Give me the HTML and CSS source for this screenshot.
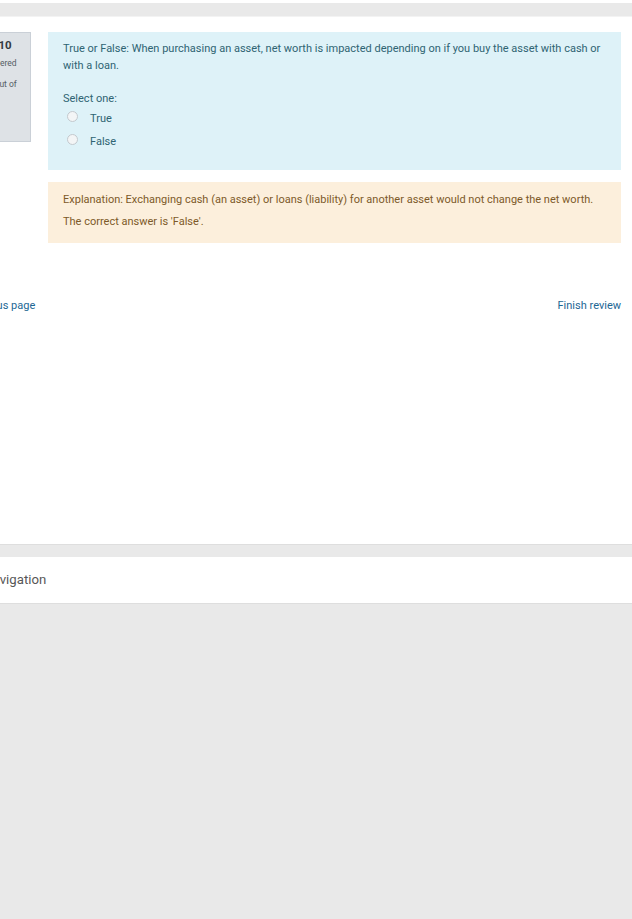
FILE: index.html
```html
<!DOCTYPE html>
<html lang="en">
<head>
<meta charset="utf-8">
<title>Quiz review</title>
<link rel="stylesheet" href="styles.css">
</head>
<body>
<div class="navbar-edge"></div>
<div class="page">
  <main class="region-main">
    <div class="que">
      <div class="info">
        <h3 class="qno">Question <span class="num">10</span></h3>
        <div class="state">Not answered</div>
        <div class="grade">Marked out of 1.00</div>
      </div>
      <div class="content">
        <div class="formulation">
          <div class="qtext">True or False: When purchasing an asset, net worth is impacted depending on if you buy the asset with cash or with a loan.</div>
          <div class="ablock">
            <div class="prompt">Select one:</div>
            <label class="answer"><span class="radio"></span>True</label>
            <label class="answer"><span class="radio"></span>False</label>
          </div>
        </div>
        <div class="outcome">
          <div class="generalfeedback">Explanation: Exchanging cash (an asset) or loans (liability) for another asset would not change the net worth.</div>
          <div class="rightanswer">The correct answer is 'False'.</div>
        </div>
      </div>
    </div>
    <div class="submitbtns">
      <a class="prev" href="#">Previous page</a>
      <a class="finish" href="#">Finish review</a>
    </div>
  </main>
  <section class="block">
    <h5 class="block-title">Quiz navigation</h5>
  </section>
</div>
</body>
</html>
```
FILE: styles.css
```css
html, body {
  margin: 0;
  padding: 0;
}

body {
  background: #e9e9e9;
  font-family: Roboto, "Liberation Sans", sans-serif;
  font-size: 11px;
  overflow: hidden;
  height: 919px;
}

.navbar-edge {
  height: 3px;
  background: #ffffff;
}

.page {
  margin-top: 13px;
}

.region-main {
  background: #ffffff;
  border-top: 1px solid #f3f3f3;
  border-bottom: 1px solid #dedede;
  padding: 15px 11px 0 0;
  box-sizing: border-box;
  height: 529px;
}

.que {
  display: flex;
  gap: 17px;
  margin-left: -42px;
}

/* question number / state / mark panel */
.info {
  width: 73px;
  flex: none;
  box-sizing: border-box;
  height: 110px;
  background: #dee2e6;
  border: 1px solid #cad0d7;
  padding: 5px 10px 5px 5px;
  color: #555d64;
}

.qno {
  margin: 0;
  font-size: 11px;
  font-weight: 400;
  color: #343a40;
  white-space: nowrap;
  line-height: 14px;
  text-indent: -12px;
}

.qno .num {
  font-weight: 700;
  font-size: 11.5px;
}

.state, .grade {
  font-size: 8.5px;
  line-height: 10px;
}

.state {
  margin-top: 5px;
  white-space: nowrap;
}

.grade {
  margin-top: 11px;
}

.content {
  flex: 1;
  min-width: 0;
}

.formulation {
  background: #def2f8;
  color: #2f6473;
  padding: 8px 15px 16px 15px;
  height: 138px;
  box-sizing: border-box;
}

.qtext {
  line-height: 17px;
}

.ablock {
  margin-top: 16px;
}

.prompt {
  line-height: 17px;
}

.answer {
  display: flex;
  align-items: center;
  height: 23px;
  padding-left: 4px;
}

.radio {
  width: 11px;
  height: 11px;
  border: 1px solid #c3c9ce;
  border-radius: 50%;
  background: #f3f5f6;
  margin-right: 12px;
  box-sizing: border-box;
  position: relative;
  top: -2px;
}

.outcome {
  margin-top: 12px;
  background: #fcefdc;
  color: #7d5a29;
  padding: 7px 15px 12px 15px;
  height: 61px;
  box-sizing: border-box;
  line-height: 22px;
}

.submitbtns {
  display: flex;
  justify-content: space-between;
  margin-top: 56px;
  margin-left: -34px;
  line-height: 13px;
}

.submitbtns a {
  color: #1d6794;
  text-decoration: none;
}

.block {
  margin-top: 12px;
  background: #ffffff;
  border-bottom: 1px solid #dedede;
  height: 47px;
  box-sizing: border-box;
  display: flex;
  align-items: center;
}

.block-title {
  margin: -2px 0 0 -44px;
  font-size: 13.2px;
  font-weight: 400;
  color: #575757;
}
```
